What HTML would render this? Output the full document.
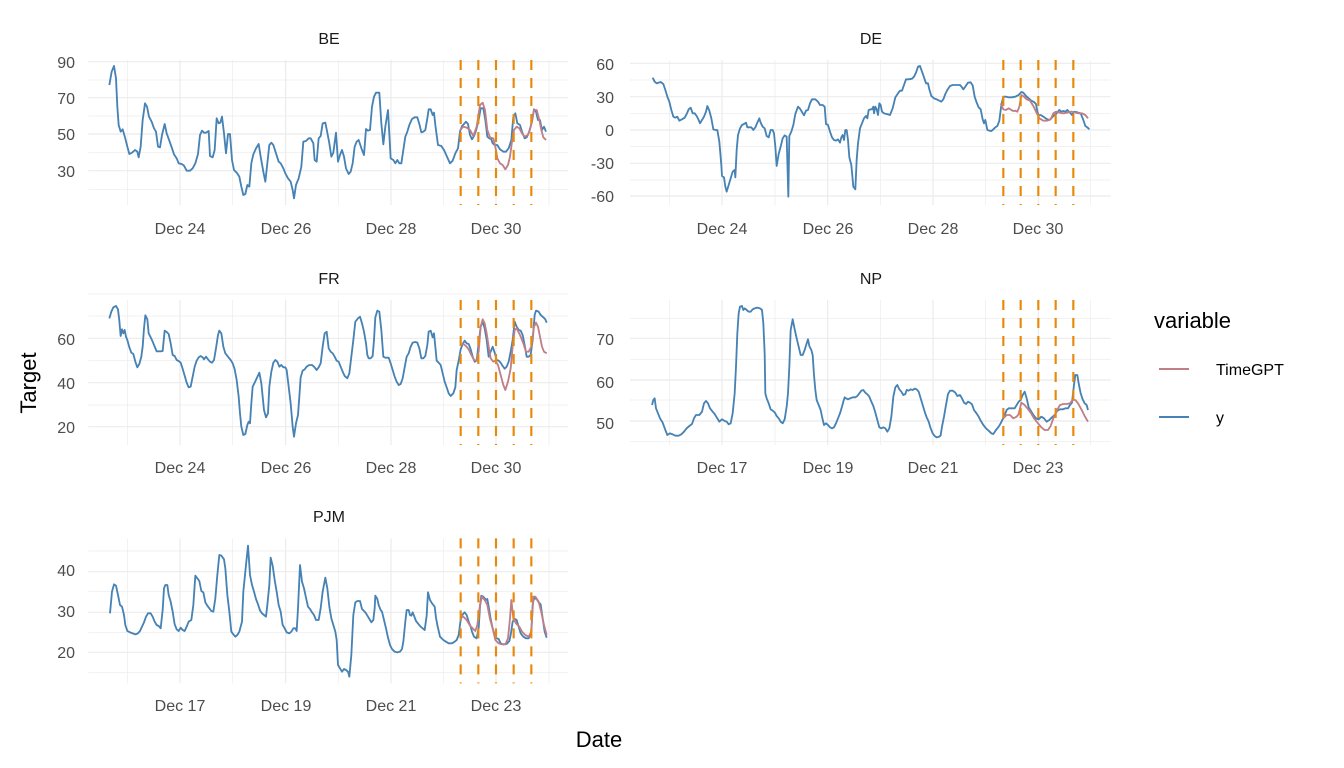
<!DOCTYPE html>
<html><head><meta charset="utf-8"><style>
html,body{margin:0;padding:0;background:#fff;}
svg{display:block;font-family:"Liberation Sans",sans-serif;}
.mj{stroke:#ebebeb;stroke-width:3.6;}
.mn{stroke:#ebebeb;stroke-width:2;}
.b{fill:none;stroke:#4682b4;stroke-width:5.5;stroke-linejoin:round;}
.r{fill:none;stroke:#bf7f86;stroke-width:5.5;stroke-linejoin:round;}
.o{stroke:#e8890c;stroke-width:6.5;stroke-dasharray:30,24;}
.t{fill:#4d4d4d;font-size:16px;}
.s{fill:#1a1a1a;font-size:16px;}
</style></head><body>
<svg width="1344" height="768" viewBox="0 0 1344 768">
<!-- BE -->
<g transform="translate(80,50) scale(0.33333)">
<g class="mn"><line x1="25" x2="1465" y1="90" y2="90"/><line x1="25" x2="1465" y1="198" y2="198"/><line x1="25" x2="1465" y1="308" y2="308"/><line x1="25" x2="1465" y1="418" y2="418"/>
<line x1="143" x2="143" y1="30" y2="465"/><line x1="458" x2="458" y1="30" y2="465"/><line x1="775" x2="775" y1="30" y2="465"/><line x1="1090" x2="1090" y1="30" y2="465"/><line x1="1407" x2="1407" y1="30" y2="465"/></g>
<g class="mj"><line x1="25" x2="1465" y1="35" y2="35"/><line x1="25" x2="1465" y1="143" y2="143"/><line x1="25" x2="1465" y1="252" y2="252"/><line x1="25" x2="1465" y1="362" y2="362"/>
<line x1="300" x2="300" y1="30" y2="465"/><line x1="617" x2="617" y1="30" y2="465"/><line x1="933" x2="933" y1="30" y2="465"/><line x1="1248" x2="1248" y1="30" y2="465"/></g>
<polyline class="b" points="88,105 95,65 102,48 108,85 112,170 116,225 122,245 128,238 135,262 142,290 148,312 156,308 165,300 172,305 176,322 182,290 188,210 195,160 201,170 207,200 215,215 222,235 228,245 234,290 240,292 246,255 254,222 260,250 268,272 275,292 282,313 290,325 296,340 305,342 312,347 320,362 330,362 338,355 346,340 354,312 360,255 366,242 372,248 378,248 386,243 390,318 398,322 404,300 410,205 416,220 421,218 426,200 432,250 438,310 444,252 450,252 456,330 462,360 470,368 478,380 484,410 490,435 496,432 502,405 508,410 514,340 520,313 528,295 536,282 542,320 550,365 556,395 562,340 568,285 574,278 580,285 588,310 596,335 602,340 610,355 616,370 624,385 632,395 638,420 642,445 648,405 656,385 664,350 670,275 678,273 686,265 692,265 700,280 704,330 710,335 716,265 722,258 728,220 736,218 742,248 748,280 754,320 760,308 768,248 774,335 780,315 786,300 792,320 798,355 806,372 812,365 818,340 824,290 830,275 836,270 846,300 852,315 858,237 864,242 870,240 876,170 882,140 888,128 898,128 904,220 910,283 916,230 924,180 932,325 940,330 946,340 952,330 958,340 964,340 970,300 976,260 982,245 988,225 996,207 1004,202 1012,202 1018,222 1024,247 1030,245 1036,240 1042,205 1046,178 1052,178 1058,195 1062,188 1066,225 1074,285 1084,288 1092,300 1100,318 1110,340 1118,332 1126,310 1134,295 1140,245 1146,228 1152,222 1158,215 1164,222 1170,255 1176,268 1182,258 1188,242 1196,210 1202,175 1210,175 1216,210 1222,260 1228,265 1234,268 1238,280 1244,285 1252,285 1260,298 1270,305 1278,305 1286,295 1294,270 1300,200 1306,190 1312,220 1320,225 1326,245 1334,265 1340,262 1348,245 1356,215 1362,178 1368,185 1374,210 1380,210 1386,240 1392,230 1398,245"/>
<polyline class="r" points="1140,240 1150,230 1160,233 1170,240 1180,258 1190,230 1200,165 1208,158 1215,180 1222,240 1230,262 1240,265 1246,290 1252,325 1260,340 1268,345 1276,358 1284,345 1290,320 1296,275 1302,240 1310,230 1318,235 1326,250 1334,260 1344,255 1352,230 1362,180 1370,180 1378,210 1384,240 1390,262 1398,270"/>
<g class="o"><line x1="1142" x2="1142" y1="30" y2="465"/><line x1="1195" x2="1195" y1="30" y2="465"/><line x1="1248" x2="1248" y1="30" y2="465"/><line x1="1301" x2="1301" y1="30" y2="465"/><line x1="1354" x2="1354" y1="30" y2="465"/></g>
</g>
<!-- DE -->
<g transform="translate(620,50) scale(0.33333)">
<g class="mn"><line x1="30" x2="1472" y1="90" y2="90"/><line x1="30" x2="1472" y1="190" y2="190"/><line x1="30" x2="1472" y1="290" y2="290"/><line x1="30" x2="1472" y1="390" y2="390"/>
<line x1="148" x2="148" y1="30" y2="465"/><line x1="465" x2="465" y1="30" y2="465"/><line x1="781" x2="781" y1="30" y2="465"/><line x1="1097" x2="1097" y1="30" y2="465"/><line x1="1412" x2="1412" y1="30" y2="465"/></g>
<g class="mj"><line x1="30" x2="1472" y1="40" y2="40"/><line x1="30" x2="1472" y1="140" y2="140"/><line x1="30" x2="1472" y1="240" y2="240"/><line x1="30" x2="1472" y1="340" y2="340"/><line x1="30" x2="1472" y1="438" y2="438"/>
<line x1="306" x2="306" y1="30" y2="465"/><line x1="623" x2="623" y1="30" y2="465"/><line x1="939" x2="939" y1="30" y2="465"/><line x1="1255" x2="1255" y1="30" y2="465"/></g>
<polyline class="b" points="98,83 104,95 110,100 116,98 122,96 130,102 136,120 142,140 148,155 154,180 160,200 166,203 172,200 178,212 186,208 194,203 200,192 206,178 212,173 218,190 224,190 230,198 236,210 240,220 246,210 252,200 258,185 262,168 268,182 274,205 280,238 286,240 292,240 298,275 304,345 306,378 312,382 316,410 320,425 326,405 332,385 338,365 344,360 346,382 350,300 354,255 360,235 366,225 372,222 378,218 382,232 388,232 394,232 400,240 406,232 412,218 418,205 422,218 428,230 434,235 440,258 446,262 452,240 458,240 462,250 466,290 470,348 476,312 482,290 488,265 494,256 500,260 505,440 508,258 514,245 520,225 526,192 534,170 540,176 546,186 552,196 558,182 564,180 570,160 576,148 586,148 594,155 600,165 608,165 614,170 618,222 624,225 630,245 636,262 642,270 648,272 654,268 660,278 664,262 668,255 672,270 676,240 680,240 684,270 688,322 694,345 700,410 706,418 710,330 714,280 720,235 726,220 732,205 738,198 742,205 746,180 752,178 756,178 760,170 762,190 766,170 770,178 774,195 778,160 782,165 786,185 792,190 800,192 810,195 818,175 826,142 834,130 840,122 846,122 852,105 858,88 866,88 876,86 882,80 888,68 894,50 900,48 906,65 912,82 918,100 924,100 928,118 934,138 942,145 950,148 958,152 964,155 970,148 976,132 982,120 990,108 998,105 1010,105 1020,105 1026,112 1030,118 1036,110 1044,98 1052,97 1058,106 1064,140 1070,158 1076,172 1082,178 1088,208 1092,220 1096,210 1102,240 1108,242 1114,243 1120,238 1126,232 1132,228 1138,212 1144,165 1150,140 1158,140 1166,142 1176,142 1186,140 1196,135 1204,126 1210,128 1218,138 1226,145 1234,152 1240,155 1244,158 1248,162 1252,185 1256,196 1262,195 1270,200 1280,207 1288,210 1294,205 1300,198 1310,190 1318,180 1324,185 1330,183 1336,185 1342,180 1350,188 1356,195 1362,185 1372,187 1382,190 1390,210 1396,228 1402,232 1408,238"/>
<polyline class="r" points="1142,160 1150,178 1158,180 1166,175 1174,180 1180,183 1186,182 1192,185 1198,170 1204,135 1212,140 1220,148 1230,152 1240,168 1248,185 1258,205 1270,212 1282,212 1292,208 1300,190 1308,185 1318,188 1330,190 1342,188 1354,185 1366,188 1376,190 1386,190 1396,195 1404,205"/>
<g class="o"><line x1="1150" x2="1150" y1="30" y2="465"/><line x1="1202" x2="1202" y1="30" y2="465"/><line x1="1255" x2="1255" y1="30" y2="465"/><line x1="1307" x2="1307" y1="30" y2="465"/><line x1="1360" x2="1360" y1="30" y2="465"/></g>
</g>
<!-- FR -->
<g transform="translate(80,290) scale(0.33333)">
<g class="mn"><line x1="25" x2="1465" y1="12" y2="12"/><line x1="25" x2="1465" y1="78" y2="78"/><line x1="25" x2="1465" y1="212" y2="212"/><line x1="25" x2="1465" y1="345" y2="345"/>
<line x1="143" x2="143" y1="30" y2="465"/><line x1="458" x2="458" y1="30" y2="465"/><line x1="775" x2="775" y1="30" y2="465"/><line x1="1090" x2="1090" y1="30" y2="465"/><line x1="1407" x2="1407" y1="30" y2="465"/></g>
<g class="mj"><line x1="25" x2="1465" y1="145" y2="145"/><line x1="25" x2="1465" y1="278" y2="278"/><line x1="25" x2="1465" y1="410" y2="410"/>
<line x1="300" x2="300" y1="30" y2="465"/><line x1="617" x2="617" y1="30" y2="465"/><line x1="933" x2="933" y1="30" y2="465"/><line x1="1248" x2="1248" y1="30" y2="465"/></g>
<polyline class="b" points="88,85 94,65 100,52 108,48 114,58 118,92 122,138 126,118 130,130 134,120 138,140 142,150 148,172 154,188 160,192 166,215 172,232 178,222 184,200 188,170 192,115 196,76 202,88 206,130 212,142 218,155 224,170 230,184 236,184 242,184 248,183 254,122 260,126 266,132 272,160 278,195 284,198 290,210 296,213 302,218 306,230 312,250 320,278 326,292 332,290 338,260 344,230 350,212 356,202 362,198 368,202 372,208 378,200 384,208 390,215 396,218 402,210 408,175 414,135 418,122 424,130 430,170 436,190 444,200 452,210 458,220 464,238 470,270 476,320 480,370 484,410 490,435 496,432 502,405 506,395 510,400 514,340 518,290 524,278 530,265 538,248 544,280 548,320 552,360 558,382 564,370 568,290 574,245 580,218 586,210 592,215 598,230 604,225 610,232 616,232 620,240 626,290 632,340 638,410 642,440 648,400 654,375 658,320 662,262 668,242 674,238 680,230 688,225 696,225 702,230 710,240 716,232 722,220 728,170 734,130 740,125 746,175 752,185 758,190 764,200 770,212 776,215 782,230 788,245 794,258 802,265 808,250 814,200 820,150 826,95 834,85 840,80 846,100 852,125 858,160 862,195 866,205 872,205 878,198 882,150 886,82 892,62 898,65 904,120 910,200 916,203 926,203 932,220 938,240 944,260 950,275 956,285 962,282 968,265 974,232 980,200 986,190 992,170 998,158 1006,156 1012,158 1018,175 1024,205 1030,205 1036,198 1042,165 1046,125 1052,122 1058,142 1062,130 1066,170 1070,212 1076,218 1082,225 1088,250 1094,275 1100,292 1106,310 1112,318 1120,310 1126,292 1130,240 1136,212 1142,178 1148,162 1154,152 1160,160 1166,162 1172,178 1178,200 1184,215 1190,212 1196,160 1202,110 1208,95 1214,115 1220,150 1226,200 1232,185 1238,170 1244,188 1250,210 1256,212 1262,218 1268,228 1274,236 1280,230 1286,215 1292,185 1298,150 1304,95 1310,110 1316,120 1322,122 1328,135 1334,165 1340,200 1346,200 1352,195 1358,150 1364,75 1368,62 1376,65 1382,75 1390,82 1396,88 1400,98"/>
<polyline class="r" points="1140,165 1150,162 1158,168 1166,178 1174,195 1182,210 1190,212 1196,185 1202,110 1208,88 1214,100 1220,130 1226,170 1232,205 1240,215 1246,212 1254,225 1262,255 1270,285 1276,300 1284,275 1292,235 1298,170 1304,120 1310,115 1320,135 1330,160 1338,185 1346,185 1354,170 1362,110 1368,98 1374,110 1380,140 1386,170 1392,185 1400,190"/>
<g class="o"><line x1="1142" x2="1142" y1="30" y2="465"/><line x1="1195" x2="1195" y1="30" y2="465"/><line x1="1248" x2="1248" y1="30" y2="465"/><line x1="1301" x2="1301" y1="30" y2="465"/><line x1="1354" x2="1354" y1="30" y2="465"/></g>
</g>
<!-- NP -->
<g transform="translate(620,290) scale(0.33333)">
<g class="mn"><line x1="30" x2="1472" y1="85" y2="85"/><line x1="30" x2="1472" y1="208" y2="208"/><line x1="30" x2="1472" y1="330" y2="330"/><line x1="30" x2="1472" y1="455" y2="455"/>
<line x1="148" x2="148" y1="30" y2="465"/><line x1="465" x2="465" y1="30" y2="465"/><line x1="781" x2="781" y1="30" y2="465"/><line x1="1097" x2="1097" y1="30" y2="465"/><line x1="1412" x2="1412" y1="30" y2="465"/></g>
<g class="mj"><line x1="30" x2="1472" y1="145" y2="145"/><line x1="30" x2="1472" y1="270" y2="270"/><line x1="30" x2="1472" y1="393" y2="393"/>
<line x1="306" x2="306" y1="30" y2="465"/><line x1="623" x2="623" y1="30" y2="465"/><line x1="939" x2="939" y1="30" y2="465"/><line x1="1255" x2="1255" y1="30" y2="465"/></g>
<polyline class="b" points="96,345 100,330 104,325 108,355 114,370 120,385 128,398 136,420 142,435 150,430 158,433 166,437 176,437 184,433 192,425 200,415 208,408 216,402 222,385 228,375 238,375 246,365 252,340 258,333 264,340 270,355 278,365 284,372 290,382 298,395 306,388 314,393 320,395 326,403 332,400 338,370 344,310 348,230 352,130 356,70 360,50 366,48 370,60 374,55 378,58 382,62 386,65 392,65 398,58 404,55 412,53 420,55 426,60 430,100 434,190 436,310 440,325 446,340 452,358 458,362 464,367 470,378 476,385 482,395 488,400 494,388 500,350 504,310 508,230 512,120 518,88 524,118 530,145 536,170 542,195 548,195 554,180 560,160 564,148 568,168 574,180 578,195 582,255 586,300 590,330 596,345 602,360 606,380 612,405 618,400 624,405 630,412 636,415 642,412 648,400 654,385 660,370 666,350 670,335 674,322 678,325 684,328 690,325 698,322 706,322 712,318 718,310 724,302 730,300 736,308 742,313 748,320 754,335 760,348 766,368 772,390 778,412 784,415 790,412 796,415 802,425 808,415 814,380 820,320 826,292 832,285 838,298 844,305 850,315 856,312 860,300 866,302 872,298 878,300 884,296 890,298 896,305 902,325 908,345 914,365 920,382 926,395 932,415 938,430 944,438 950,442 958,440 962,436 966,410 972,380 978,345 984,312 990,302 998,302 1006,308 1012,318 1020,315 1026,325 1032,338 1038,342 1044,335 1050,338 1056,343 1062,360 1068,368 1076,380 1082,392 1090,405 1098,415 1106,422 1114,430 1120,432 1128,420 1136,410 1142,400 1148,388 1154,375 1160,360 1166,355 1174,355 1184,355 1190,345 1196,335 1202,330 1208,315 1214,305 1220,325 1226,352 1234,365 1240,375 1248,385 1256,388 1264,380 1272,385 1280,395 1288,390 1296,382 1304,375 1312,362 1320,358 1328,358 1336,355 1344,355 1350,345 1356,338 1362,285 1366,255 1372,255 1376,280 1382,310 1388,328 1394,340 1400,345 1404,360"/>
<polyline class="r" points="1150,385 1160,375 1170,375 1180,385 1190,380 1196,372 1204,338 1214,345 1222,355 1232,368 1242,385 1254,400 1264,412 1274,420 1284,420 1292,408 1300,385 1310,362 1320,345 1330,342 1340,342 1350,340 1358,330 1366,330 1374,340 1384,358 1394,378 1404,395"/>
<g class="o"><line x1="1150" x2="1150" y1="30" y2="465"/><line x1="1202" x2="1202" y1="30" y2="465"/><line x1="1255" x2="1255" y1="30" y2="465"/><line x1="1307" x2="1307" y1="30" y2="465"/><line x1="1360" x2="1360" y1="30" y2="465"/></g>
</g>
<!-- PJM -->
<g transform="translate(80,525) scale(0.33333)">
<g class="mn"><line x1="25" x2="1465" y1="78" y2="78"/><line x1="25" x2="1465" y1="200" y2="200"/><line x1="25" x2="1465" y1="322" y2="322"/><line x1="25" x2="1465" y1="442" y2="442"/>
<line x1="143" x2="143" y1="40" y2="475"/><line x1="458" x2="458" y1="40" y2="475"/><line x1="775" x2="775" y1="40" y2="475"/><line x1="1090" x2="1090" y1="40" y2="475"/><line x1="1407" x2="1407" y1="40" y2="475"/></g>
<g class="mj"><line x1="25" x2="1465" y1="140" y2="140"/><line x1="25" x2="1465" y1="262" y2="262"/><line x1="25" x2="1465" y1="382" y2="382"/>
<line x1="300" x2="300" y1="40" y2="475"/><line x1="617" x2="617" y1="40" y2="475"/><line x1="933" x2="933" y1="40" y2="475"/><line x1="1248" x2="1248" y1="40" y2="475"/></g>
<polyline class="b" points="90,265 96,200 102,178 108,182 114,210 120,240 126,245 132,270 136,300 142,318 150,322 158,325 166,328 174,325 180,318 186,305 192,292 198,275 204,265 212,265 218,275 224,290 230,300 236,303 242,310 248,255 252,190 256,180 262,180 266,210 272,230 278,260 284,298 290,313 296,318 302,308 308,315 314,318 320,305 326,290 334,285 340,240 346,152 352,160 358,168 364,198 370,202 376,232 382,242 388,250 394,258 400,260 406,220 412,150 418,90 424,92 432,103 436,130 442,210 448,260 454,320 460,328 466,335 472,330 478,320 486,290 490,200 498,120 504,62 510,150 516,180 522,200 528,222 534,238 540,256 546,265 552,270 558,275 562,240 568,180 572,98 578,122 584,165 590,200 596,240 602,260 608,300 614,310 620,322 628,325 634,320 640,310 646,310 650,318 654,250 660,120 666,170 672,190 678,218 684,245 690,252 696,262 702,270 708,285 716,285 722,250 728,200 736,158 742,190 748,245 754,280 760,300 766,320 770,345 774,420 780,430 786,440 792,432 798,435 804,440 808,455 814,390 820,270 826,232 832,228 840,228 846,252 852,258 858,265 864,275 870,285 874,292 880,285 884,250 886,212 892,222 896,240 902,255 906,260 912,285 918,310 924,338 930,360 936,372 944,380 952,382 960,380 966,372 970,350 976,290 980,255 986,255 990,270 994,272 998,262 1002,272 1008,288 1016,298 1022,305 1028,310 1034,315 1040,272 1044,202 1050,225 1056,235 1064,245 1068,278 1072,300 1080,335 1090,345 1098,350 1106,355 1116,355 1124,350 1130,345 1136,330 1142,285 1148,268 1154,262 1160,270 1166,290 1172,305 1176,320 1182,335 1190,340 1196,310 1200,245 1204,212 1210,215 1218,225 1222,222 1226,245 1232,282 1238,310 1244,330 1250,340 1256,342 1262,355 1270,358 1280,357 1288,348 1292,330 1298,290 1304,282 1310,285 1316,305 1322,325 1330,335 1338,340 1346,340 1354,320 1358,240 1362,218 1370,222 1376,232 1382,238 1388,280 1394,320 1400,338"/>
<polyline class="r" points="1142,268 1150,275 1160,285 1170,302 1178,310 1186,318 1192,300 1200,240 1206,215 1214,225 1222,240 1230,282 1238,310 1246,345 1256,355 1266,358 1276,358 1284,340 1290,280 1294,225 1300,280 1308,295 1318,305 1326,320 1336,330 1346,335 1354,320 1360,215 1366,215 1376,230 1384,262 1392,300 1400,330"/>
<g class="o"><line x1="1142" x2="1142" y1="40" y2="475"/><line x1="1195" x2="1195" y1="40" y2="475"/><line x1="1248" x2="1248" y1="40" y2="475"/><line x1="1301" x2="1301" y1="40" y2="475"/><line x1="1354" x2="1354" y1="40" y2="475"/></g>
</g>

<!-- strip titles -->
<g class="s" text-anchor="middle">
<text x="329" y="44">BE</text><text x="871" y="44">DE</text>
<text x="329" y="284">FR</text><text x="871" y="284">NP</text>
<text x="329" y="522">PJM</text>
</g>
<!-- y tick labels -->
<g class="t" text-anchor="end">
<text x="75" y="68">90</text><text x="75" y="104">70</text><text x="75" y="140">50</text><text x="75" y="177">30</text>
<text x="614" y="70">60</text><text x="614" y="103">30</text><text x="614" y="136">0</text><text x="614" y="169">-30</text><text x="614" y="202">-60</text>
<text x="75" y="345">60</text><text x="75" y="389">40</text><text x="75" y="433">20</text>
<text x="614" y="345">70</text><text x="614" y="388">60</text><text x="614" y="429">50</text>
<text x="75" y="576">40</text><text x="75" y="617">30</text><text x="75" y="658">20</text>
</g>
<!-- x tick labels -->
<g class="t" text-anchor="middle">
<text x="180" y="234">Dec 24</text><text x="286" y="234">Dec 26</text><text x="391" y="234">Dec 28</text><text x="496" y="234">Dec 30</text>
<text x="722" y="234">Dec 24</text><text x="828" y="234">Dec 26</text><text x="933" y="234">Dec 28</text><text x="1038" y="234">Dec 30</text>
<text x="180" y="473">Dec 24</text><text x="286" y="473">Dec 26</text><text x="391" y="473">Dec 28</text><text x="496" y="473">Dec 30</text>
<text x="722" y="473">Dec 17</text><text x="828" y="473">Dec 19</text><text x="933" y="473">Dec 21</text><text x="1038" y="473">Dec 23</text>
<text x="180" y="711">Dec 17</text><text x="286" y="711">Dec 19</text><text x="391" y="711">Dec 21</text><text x="496" y="711">Dec 23</text>
</g>
<!-- axis titles -->
<text x="599" y="747" text-anchor="middle" font-size="22" fill="#000">Date</text>
<text transform="translate(36,383) rotate(-90)" text-anchor="middle" font-size="22" fill="#000">Target</text>
<!-- legend -->
<text x="1154" y="328" font-size="22" fill="#000">variable</text>
<line x1="1159" x2="1189" y1="369" y2="369" stroke="#bf7f86" stroke-width="2"/>
<text x="1216" y="375" font-size="16" fill="#000">TimeGPT</text>
<line x1="1159" x2="1189" y1="417" y2="417" stroke="#4682b4" stroke-width="2"/>
<text x="1216" y="423" font-size="16" fill="#000">y</text>
</svg>
</body></html>
